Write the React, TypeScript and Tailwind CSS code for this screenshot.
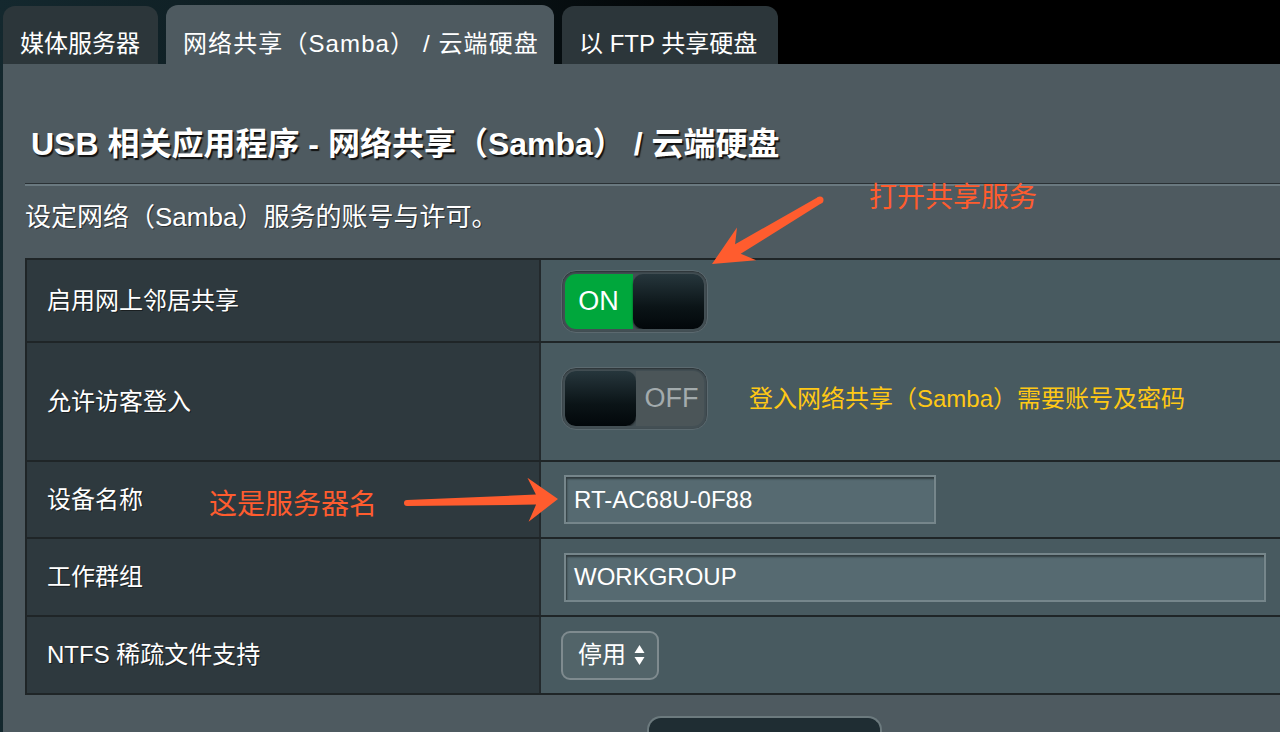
import React from 'react';

const FONT = "font-['Liberation_Sans','Noto_Sans_CJK_SC',sans-serif]";

function Tab({ label, active, width, extra = '' }: { label: string; active?: boolean; width: string; extra?: string }) {
  return (
    <div
      className={`${width} ${active ? 'h-[59px] bg-[#4e5a60]' : 'h-[58px] bg-[#2c363a]'} rounded-t-[12px] pl-[17px] flex items-end pb-[6px] text-[24px] leading-[28px] text-white whitespace-nowrap ${extra}`}
    >
      {label}
    </div>
  );
}

function Toggle({ on }: { on: boolean }) {
  const knob = (
    <div className="w-[71px] h-full rounded-[10px] bg-[linear-gradient(180deg,#26363c_0%,#0b1417_60%,#02070a_100%)] shadow-[0_1px_2px_rgba(0,0,0,0.6)]" />
  );
  return (
    <div className="w-[147px] h-[63px] rounded-[15px] border border-[#5b696f] bg-[#434f54] p-[3px] shadow-[inset_0_1px_2px_rgba(0,0,0,0.4)]">
      <div className="flex h-full rounded-[11px] overflow-hidden">
        {on ? (
          <>
            <div className="flex-1 bg-[#00a73c] flex items-center justify-center pr-[1px] text-[27px] text-white">ON</div>
            {knob}
          </>
        ) : (
          <>
            {knob}
            <div className="flex-1 bg-[#4b5558] flex items-center justify-center pl-[3px] text-[27px] text-[#a3abad]">OFF</div>
          </>
        )}
      </div>
    </div>
  );
}

function TextBox({ value, width }: { value: string; width: string }) {
  return (
    <div
      className={`${width} h-[49px] ml-[23px] bg-[#566a71] border-2 border-[#76868b] shadow-[inset_1px_2px_2px_rgba(0,0,0,0.45)] flex items-center pl-[8px] text-[24px] text-white`}
    >
      {value}
    </div>
  );
}

function Row({ label, height, children, cellClass = '' }: { label: string; height: string; children?: React.ReactNode; cellClass?: string }) {
  return (
    <div className={`flex ${height} border-b-2 border-[#1f2527]`}>
      <div className="w-[514px] shrink-0 bg-[#2e393e] border-r-2 border-[#23292c] flex items-center pl-[20px] text-[24px] text-white [text-shadow:1px_1px_0_#1a1f21]">
        {label}
      </div>
      <div className={`flex-1 bg-[#485a60] flex items-center ${cellClass}`}>{children}</div>
    </div>
  );
}

export default function App() {
  return (
    <div className={`w-[1280px] h-[732px] overflow-hidden relative flex flex-col ${FONT} bg-[linear-gradient(90deg,#14282e_0%,#0a161a_35%,#000_58%)]`}>
      {/* tabs */}
      <div className="h-[64px] shrink-0 flex items-end gap-[8px] pl-[3px]">
        <Tab label="媒体服务器" width="w-[155px]" />
        <Tab label="网络共享（Samba） / 云端硬盘" width="w-[388px]" active extra="tracking-[1.1px]" />
        <Tab label="以 FTP 共享硬盘" width="w-[216px]" />
      </div>

      {/* panel */}
      <div className="flex-1 ml-[3px] bg-[#4e5a60] pl-[22px] pt-[62px] flex flex-col">
        <div className="pl-[6px] text-[32px] leading-[37px] font-bold text-white whitespace-nowrap [text-shadow:1.5px_1.5px_1px_#111]">
          USB 相关应用程序 - 网络共享（Samba） / 云端硬盘
        </div>
        <div className="mt-[20px] h-[1px] bg-[#2a3135]" />
        <div className="h-[2px] bg-[#6a7980]" />
        <div className="mt-[15px] text-[26px] leading-[32px] text-white [text-shadow:1px_1px_0_#2a3034]">
          设定网络（Samba）服务的账号与许可。
        </div>

        {/* settings table */}
        <div className="mt-[25px] border-t-2 border-l-2 border-[#1f2527]">
          <Row label="启用网上邻居共享" height="h-[83px]" cellClass="pl-[20px] pt-[1px]">
            <Toggle on />
          </Row>
          <Row label="允许访客登入" height="h-[119px]" cellClass="pl-[20px] pb-[6px]">
            <Toggle on={false} />
            <span className="ml-[41px] text-[24px] text-[#ffc815]">登入网络共享（Samba）需要账号及密码</span>
          </Row>
          <Row label="设备名称" height="h-[77px]">
            <TextBox value="RT-AC68U-0F88" width="w-[372px]" />
          </Row>
          <Row label="工作群组" height="h-[78px]">
            <TextBox value="WORKGROUP" width="w-[702px]" />
          </Row>
          <Row label="NTFS 稀疏文件支持" height="h-[78px]" cellClass="pl-[20px]">
            <div className="w-[98px] h-[49px] rounded-[9px] border-2 border-[#7f8b8f] bg-[#526469] flex items-center pl-[15px] gap-[8px] text-[24px] text-white">
              <span>停用</span>
              <svg width="11" height="22" viewBox="0 0 11 22">
                <path d="M5.5 1 L10.5 9 L0.5 9 Z" fill="#fff" />
                <path d="M5.5 21 L10.5 13 L0.5 13 Z" fill="#fff" />
              </svg>
            </div>
          </Row>
        </div>

        <div className="mt-[21px] ml-[622px] w-[235px] h-[40px] shrink-0 rounded-t-[14px] bg-[#1f2d33] border-2 border-b-0 border-[#6c7a7e]" />
      </div>

      {/* annotations */}
      <div className="absolute inset-0 pointer-events-none">
        <span className="absolute left-[869px] top-[181px] text-[28px] leading-[34px] text-[#ff5c2e]">打开共享服务</span>
        <span className="absolute left-[209px] top-[488px] text-[28px] leading-[34px] text-[#ff5c2e]">这是服务器名</span>
        <svg className="absolute left-0 top-0" width="1280" height="732" viewBox="0 0 1280 732">
          <path d="M712 264 L756.2 260.2 L740.7 253.7 L821.8 203.0 L818.2 197.0 L735.1 244.2 L737.0 227.4 Z" fill="#ff5c2e" />
          <circle cx="820" cy="200" r="3.5" fill="#ff5c2e" />
          <path d="M558 499 L528.6 521.8 L536.1 504.6 L407.1 506 L406.9 500 L535.9 494.6 L527.4 477.8 Z" fill="#ff5c2e" />
          <circle cx="407" cy="503" r="3" fill="#ff5c2e" />
        </svg>
      </div>
    </div>
  );
}
